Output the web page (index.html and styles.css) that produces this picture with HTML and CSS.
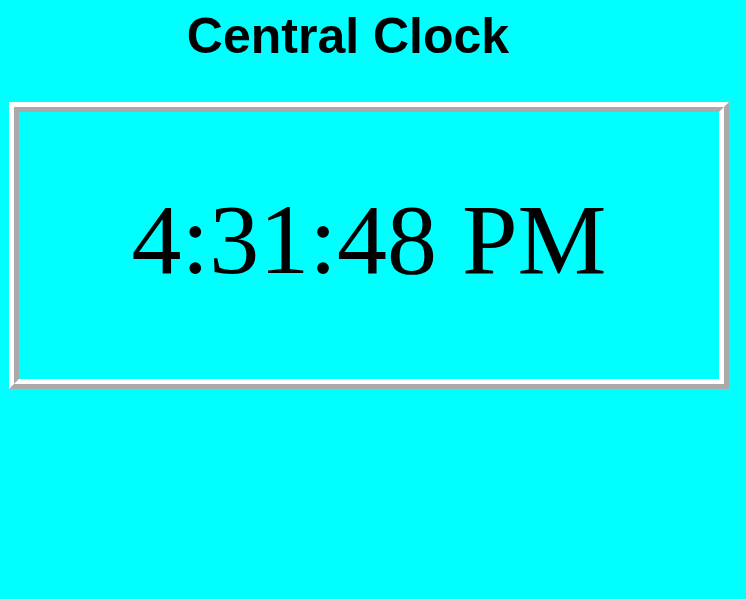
FILE: index.html
```html
<!DOCTYPE html>
<html>
<head>
<meta charset="utf-8">
<link rel="stylesheet" href="styles.css">
</head>
<body>
<div class="page">
  <h1 class="title">Central Clock</h1>
  <div class="frame">
    <div class="cell"><span class="time">4:31:48 PM</span></div>
  </div>
</div>
</body>
</html>
```
FILE: styles.css
```css
html, body {
  margin: 0;
  padding: 0;
  background: #00ffff;
}
.page {
  padding: 8px 0 0 8px;
}
.title {
  margin: 0;
  width: 680px;
  text-align: center;
  font-family: "Liberation Sans", Arial, sans-serif;
  font-weight: bold;
  font-size: 50px;
  line-height: 57px;
  color: #000;
}
.frame {
  box-sizing: border-box;
  margin: 37px 0 0 1px;
  width: 720px;
  height: 287px;
  border: 5px solid;
  border-color: #ffffff #aaaaaa #aaaaaa #ffffff;
  display: flex;
}
.cell {
  flex: 1;
  border: 5px solid;
  border-color: #aaaaaa #ffffff #ffffff #aaaaaa;
  padding-bottom: 12px;
  display: flex;
  align-items: center;
  justify-content: center;
}
.time {
  font-family: "Liberation Serif", "Times New Roman", serif;
  font-size: 100px;
  line-height: 100px;
  color: #000;
}
```
